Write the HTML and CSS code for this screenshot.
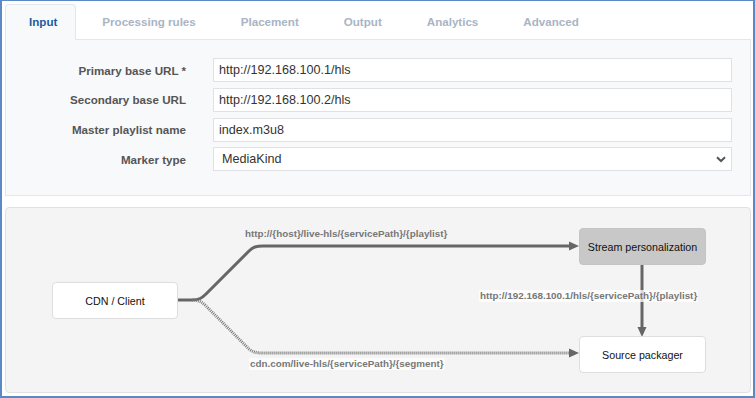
FILE: index.html
```html
<!DOCTYPE html>
<html>
<head>
<meta charset="utf-8">
<link rel="stylesheet" href="styles.css">
</head>
<body>
<div class="window">
  <div class="tabs">
    <div class="tab active">Input</div>
    <div class="tab">Processing rules</div>
    <div class="tab">Placement</div>
    <div class="tab">Output</div>
    <div class="tab">Analytics</div>
    <div class="tab">Advanced</div>
  </div>
  <div class="panel">
    <div class="form">
      <label class="label">Primary base URL *</label>
      <div class="input">http://192.168.100.1/hls</div>
      <label class="label">Secondary base URL</label>
      <div class="input">http://192.168.100.2/hls</div>
      <label class="label">Master playlist name</label>
      <div class="input">index.m3u8</div>
      <label class="label">Marker type</label>
      <div class="input select"><span>MediaKind</span>
        <svg class="chevron" width="10" height="7" viewBox="0 0 10 7"><path d="M1 1.2 L5 5 L9 1.2" fill="none" stroke="#555" stroke-width="2"/></svg>
      </div>
    </div>
  </div>
  <div class="diagram">
    <svg class="edges" width="743" height="184" viewBox="0 0 743 184">
      <path d="M172 92 L186 92 C193 92 196 90 200 86 L243 43 C247 39 250 38 257 38 L565 38" fill="none" stroke="#666" stroke-width="3"/>
      <polygon points="563,33.5 573,38 563,42.5" fill="#666"/>
      <path d="M186 92 C193 92 196 94 200 98 L243 141 C247 144 250 145 257 145 L565 145" fill="none" stroke="#777" stroke-width="3" stroke-dasharray="1 1"/>
      <polygon points="563,140.5 573,145 563,149.5" fill="#666"/>
      <path d="M636 56 L636 121" fill="none" stroke="#666" stroke-width="3"/>
      <polygon points="631.5,119 636,129 640.5,119" fill="#666"/>
    </svg>
    <div class="edge-label l-top">http://{host}/live-hls/{servicePath}/{playlist}</div>
    <div class="edge-label l-bottom">cdn.com/live-hls/{servicePath}/{segment}</div>
    <div class="edge-label l-mid">http://192.168.100.1/hls/{servicePath}/{playlist}</div>
    <div class="node n-cdn">CDN / Client</div>
    <div class="node n-stream">Stream personalization</div>
    <div class="node n-source">Source packager</div>
  </div>
</div>
</body>
</html>
```
FILE: styles.css
```css
* { box-sizing: border-box; }
html, body { margin: 0; padding: 0; background: #fff; }
body { font-family: "Liberation Sans", Arial, sans-serif; }

.window {
  width: 755px;
  height: 398px;
  border-style: solid;
  border-color: #5b89c6;
  border-width: 1px 2px 2px 2px;
  padding: 3px 2px 0 3px;
  background: #fff;
  display: flex;
  flex-direction: column;
}

.tabs {
  display: flex;
  height: 36px;
  margin-bottom: -1px;
  position: relative;
  z-index: 1;
}
.tab {
  padding: 0 21.5px;
  border: 1px solid transparent;
  border-bottom: none;
  border-radius: 4px 4px 0 0;
  font-size: 11.6px;
  font-weight: bold;
  color: #a9b4c4;
  line-height: 34px;
}
.tab.active {
  background: #f8f9fb;
  border-color: #e3e6ea;
  color: #1b5c9c;
  padding-left: 23px;
  padding-right: 18px;
  margin-right: 3.5px;
  height: 36px;
}

.panel {
  background: #f8f9fb;
  border: 1px solid #e3e6ea;
  height: 157px;
  padding: 18px 18px 0 0;
}
.form {
  display: grid;
  grid-template-columns: 180px 1fr;
  column-gap: 27px;
  row-gap: 5.8px;
  align-items: center;
}
.label {
  text-align: right;
  font-size: 11.6px;
  font-weight: bold;
  color: #555;
}
.input {
  height: 24px;
  background: #fff;
  border: 1px solid #dfe1e4;
  font-size: 12.6px;
  color: #333;
  padding-left: 5px;
  line-height: 22px;
}
.select {
  display: flex;
  justify-content: space-between;
  align-items: center;
  padding-left: 8px;
  padding-right: 5px;
}
.chevron { display: block; }

.diagram {
  margin-top: 11px;
  height: 186px;
  background: #f4f4f4;
  border: 1px solid #e1e1e1;
  border-radius: 4px;
  position: relative;
}
.edges { position: absolute; left: 0; top: 0; }

.edge-label {
  position: absolute;
  font-size: 9.85px;
  font-weight: bold;
  color: #777;
  line-height: 12px;
  background: rgba(255,255,255,0.75);
  padding: 0 1px;
  white-space: nowrap;
}
.l-top { left: 238px; top: 20px; background: transparent; }
.l-bottom { left: 243px; top: 150px; }
.l-mid { left: 473px; top: 82px; }

.node {
  position: absolute;
  width: 127px;
  height: 37px;
  border: 1px solid #dedede;
  border-radius: 4px;
  background: #fff;
  font-size: 10.7px;
  color: #111;
  display: flex;
  align-items: center;
  justify-content: center;
}
.n-cdn { left: 46px; top: 74px; width: 126px; }
.n-stream { left: 573px; top: 20px; background: #c8c8c8; border-color: #c4c4c4; }
.n-source { left: 573px; top: 128px; }
```
